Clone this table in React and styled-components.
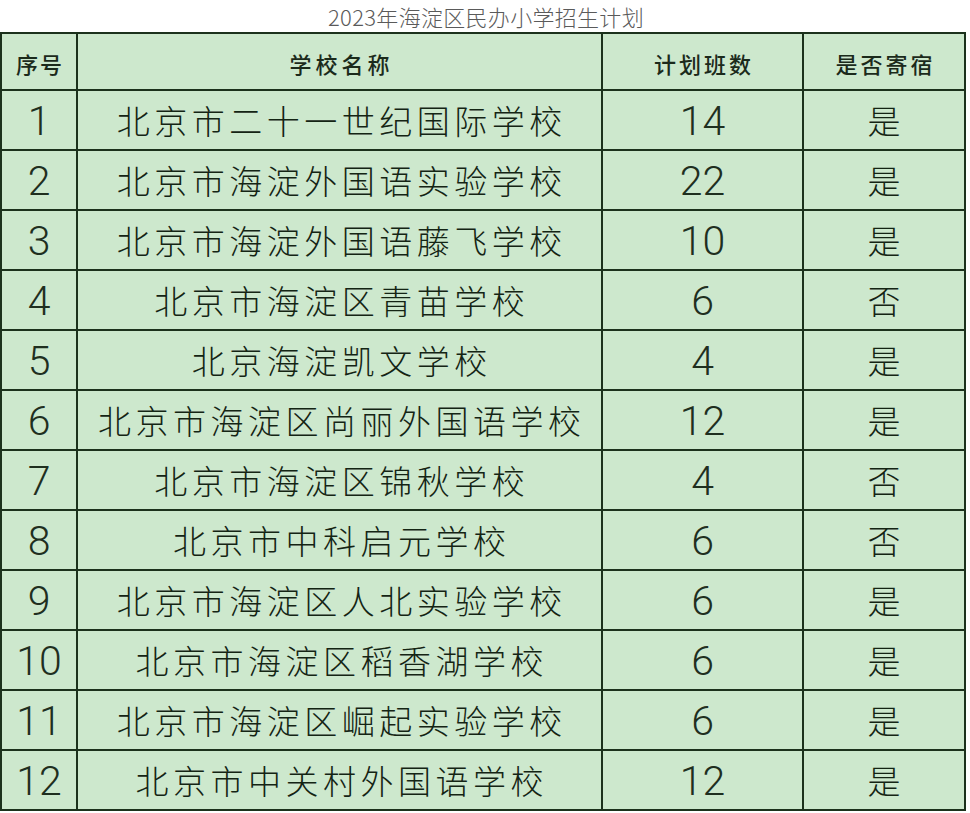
import React from "react";
import styled, { createGlobalStyle } from "styled-components";

const Global = createGlobalStyle`
  html, body { margin: 0; padding: 0; background: #ffffff; }
  body { font-family: "Noto Sans CJK SC", "Noto Sans", sans-serif; }
`;

const Page = styled.div`
  width: 970px;
  display: flex;
  flex-direction: column;
`;

const Title = styled.div`
  height: 32px;
  display: flex;
  align-items: center;
  justify-content: center;
  padding-left: 2px;
  font-family: "Noto Sans CJK SC", sans-serif;
  font-weight: 300;
  font-size: 22px;
  letter-spacing: 0.3px;
  color: #5a5a5a;
  line-height: 1;
`;

const Table = styled.div`
  width: 962px;
  display: grid;
  grid-template-columns: 74px 523px 199px 160px;
  grid-template-rows: 55px repeat(12, 58px);
  gap: 2px;
  padding: 2px;
  background: #1c311c;
`;

const Cell = styled.div`
  background: #cde8cd;
  display: flex;
  align-items: center;
  justify-content: center;
  color: #1b2a1b;
  overflow: hidden;
  white-space: nowrap;
`;

const HeadCell = styled(Cell)`
  font-family: "Noto Sans CJK SC", sans-serif;
  font-weight: 500;
  font-size: 22px;
  letter-spacing: ${(p) => p.$sp || 3}px;
  padding-left: ${(p) => p.$sp || 3}px;
  padding-top: 2px;
`;

const NumCell = styled(Cell)`
  font-family: Roboto, "Liberation Sans", sans-serif;
  font-weight: 300;
  font-size: 41px;
  color: #1f2f1f;
  padding-top: 2px;
`;

const NameCell = styled(Cell)`
  font-family: "Noto Sans CJK SC", sans-serif;
  font-weight: 300;
  font-size: 33px;
  letter-spacing: 4.5px;
  padding-left: 4.5px;
  color: #142414;
`;

const YesCell = styled(Cell)`
  font-family: "Noto Sans CJK SC", sans-serif;
  font-weight: 300;
  font-size: 33px;
  color: #142414;
`;

const rows = [
  ["1", "北京市二十一世纪国际学校", "14", "是"],
  ["2", "北京市海淀外国语实验学校", "22", "是"],
  ["3", "北京市海淀外国语藤飞学校", "10", "是"],
  ["4", "北京市海淀区青苗学校", "6", "否"],
  ["5", "北京海淀凯文学校", "4", "是"],
  ["6", "北京市海淀区尚丽外国语学校", "12", "是"],
  ["7", "北京市海淀区锦秋学校", "4", "否"],
  ["8", "北京市中科启元学校", "6", "否"],
  ["9", "北京市海淀区人北实验学校", "6", "是"],
  ["10", "北京市海淀区稻香湖学校", "6", "是"],
  ["11", "北京市海淀区崛起实验学校", "6", "是"],
  ["12", "北京市中关村外国语学校", "12", "是"],
];

export default function App() {
  return (
    <Page>
      <Global />
      <Title>2023年海淀区民办小学招生计划</Title>
      <Table>
        <HeadCell $sp={2}>序号</HeadCell>
        <HeadCell $sp={4}>学校名称</HeadCell>
        <HeadCell $sp={3}>计划班数</HeadCell>
        <HeadCell $sp={3}>是否寄宿</HeadCell>
        {rows.map((r) => (
          <React.Fragment key={r[0]}>
            <NumCell>{r[0]}</NumCell>
            <NameCell>{r[1]}</NameCell>
            <NumCell>{r[2]}</NumCell>
            <YesCell>{r[3]}</YesCell>
          </React.Fragment>
        ))}
      </Table>
    </Page>
  );
}
